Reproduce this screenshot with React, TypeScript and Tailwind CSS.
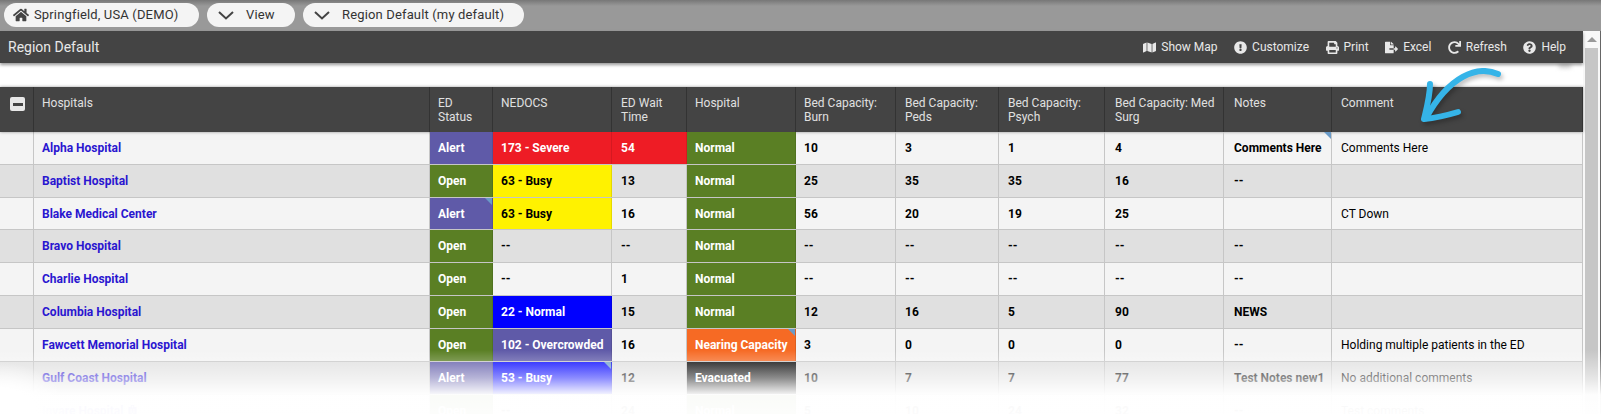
import { FaExclamationCircle, FaFileExport, FaHome, FaHospital, FaMap, FaPrint, FaQuestionCircle, FaRedo } from 'react-icons/fa';

const cols = 'grid grid-cols-[34px_396px_63px_119px_75px_109px_100px_103px_106px_119px_108px_251px]';

// left padding per column, the source table has fractional widths
const pads = ['pl-2', 'pl-2', 'pl-[9px]', 'pl-2', 'pl-2', 'pl-[9px]', 'pl-[9px]', 'pl-[10px]', 'pl-[10px]', 'pl-[9px]'];

const GREEN = 'bg-[#5a7f24] text-white';
const PURPLE = 'bg-[#5f5aa8] text-white';
const RED = 'bg-[#ee1c25] text-white';
const YELLOW = 'bg-[#fff200] text-black';
const BLUE = 'bg-[#0000ff] text-white';
const ORANGE = 'bg-[#f66a24] text-white';
const BLACK = 'bg-black text-white';

type Cell = { text?: string; color?: string; flag?: boolean; normal?: boolean };

const headers = ['ED Status', 'NEDOCS', 'ED Wait Time', 'Hospital', 'Bed Capacity: Burn', 'Bed Capacity: Peds', 'Bed Capacity: Psych', 'Bed Capacity: Med Surg', 'Notes', 'Comment'];

const rows: { name: string; icon?: boolean; cells: Cell[] }[] = [
  { name: 'Alpha Hospital', cells: [
    { text: 'Alert', color: PURPLE }, { text: '173 - Severe', color: RED }, { text: '54', color: RED }, { text: 'Normal', color: GREEN },
    { text: '10' }, { text: '3' }, { text: '1' }, { text: '4' }, { text: 'Comments Here', flag: true }, { text: 'Comments Here', normal: true },
  ] },
  { name: 'Baptist Hospital', cells: [
    { text: 'Open', color: GREEN }, { text: '63 - Busy', color: YELLOW }, { text: '13' }, { text: 'Normal', color: GREEN },
    { text: '25' }, { text: '35' }, { text: '35' }, { text: '16' }, { text: '--' }, {},
  ] },
  { name: 'Blake Medical Center', cells: [
    { text: 'Alert', color: PURPLE, flag: true }, { text: '63 - Busy', color: YELLOW }, { text: '16' }, { text: 'Normal', color: GREEN },
    { text: '56' }, { text: '20' }, { text: '19' }, { text: '25' }, {}, { text: 'CT Down', normal: true },
  ] },
  { name: 'Bravo Hospital', cells: [
    { text: 'Open', color: GREEN }, { text: '--' }, { text: '--' }, { text: 'Normal', color: GREEN },
    { text: '--' }, { text: '--' }, { text: '--' }, { text: '--' }, { text: '--' }, {},
  ] },
  { name: 'Charlie Hospital', cells: [
    { text: 'Open', color: GREEN }, { text: '--' }, { text: '1' }, { text: 'Normal', color: GREEN },
    { text: '--' }, { text: '--' }, { text: '--' }, { text: '--' }, { text: '--' }, {},
  ] },
  { name: 'Columbia Hospital', cells: [
    { text: 'Open', color: GREEN }, { text: '22 - Normal', color: BLUE }, { text: '15' }, { text: 'Normal', color: GREEN },
    { text: '12' }, { text: '16' }, { text: '5' }, { text: '90' }, { text: 'NEWS' }, {},
  ] },
  { name: 'Fawcett Memorial Hospital', cells: [
    { text: 'Open', color: GREEN }, { text: '102 - Overcrowded', color: PURPLE }, { text: '16' }, { text: 'Nearing Capacity', color: ORANGE, flag: true },
    { text: '3' }, { text: '0' }, { text: '0' }, { text: '0' }, { text: '--' }, { text: 'Holding multiple patients in the ED', normal: true },
  ] },
  { name: 'Gulf Coast Hospital', cells: [
    { text: 'Alert', color: PURPLE }, { text: '53 - Busy', color: BLUE, flag: true }, { text: '12' }, { text: 'Evacuated', color: BLACK },
    { text: '10' }, { text: '7' }, { text: '7' }, { text: '77' }, { text: 'Test Notes new1' }, { text: 'No additional comments', normal: true },
  ] },
  { name: 'Invare Hospital', icon: true, cells: [
    { text: 'Open', color: GREEN }, { text: '--' }, { text: '24' }, { text: 'Normal', color: GREEN },
    { text: '5' }, { text: '10' }, { text: '24' }, { text: '32' }, { text: '--' }, { text: 'Test comments', normal: true },
  ] },
];

const tools = [
  { label: 'Show Map', Icon: FaMap },
  { label: 'Customize', Icon: FaExclamationCircle },
  { label: 'Print', Icon: FaPrint },
  { label: 'Excel', Icon: FaFileExport },
  { label: 'Refresh', Icon: FaRedo },
  { label: 'Help', Icon: FaQuestionCircle },
];

function Chevron() {
  return (
    <svg width="16" height="9" viewBox="0 0 16 9" fill="none" stroke="#444" strokeWidth="2">
      <path d="M1 1l7 6.5L15 1" />
    </svg>
  );
}

export default function App() {
  return (
    <div className="relative h-[414px] w-[1601px] overflow-hidden bg-white font-['Roboto',sans-serif] text-xs">
      <div className="flex h-[31px] items-start gap-2 bg-[linear-gradient(#777777,#999999_6px)] pl-1 pt-[3px] text-[13px] tracking-[0.15px]">
        <div className="flex h-6 w-[195px] items-center gap-[5px] rounded-full bg-[#f4f4f4] pl-[9px] text-[#333]">
          <FaHome size={16} color="#444" />
          Springfield, USA (DEMO)
        </div>
        <div className="flex h-6 w-[88px] items-center gap-3 rounded-full bg-[#f4f4f4] pl-[11px] text-[#333]">
          <Chevron />
          View
        </div>
        <div className="flex h-6 w-[221px] items-center gap-3 rounded-full bg-[#f4f4f4] pl-[11px] text-[#333]">
          <Chevron />
          Region Default (my default)
        </div>
      </div>

      <div className="flex">
        <div className="w-[1583px]">
          <div className="relative z-10 flex h-8 items-center justify-between bg-[#444444] pl-2 pr-[17px] shadow-[0_2px_3px_rgba(0,0,0,0.4)]">
            <span className="text-sm text-[#e8e8e8]">Region Default</span>
            <div className="flex items-center gap-[16.5px]">
              {tools.map(({ label, Icon }) => (
                <span key={label} className="flex items-center gap-[5px] text-[#e8e8e8]">
                  <Icon size={13} />
                  {label}
                </span>
              ))}
            </div>
          </div>

          <div className={`${cols} relative mt-6 h-[45px] bg-[#444444] text-[#e0e0e0] shadow-[0_0_3px_rgba(0,0,0,0.4)]`}>
            <div className="border-r border-[#333] pl-[10px] pt-[10px]">
              <div className="flex h-[14px] w-[15px] items-center justify-center rounded-[2px] bg-[#e8e8e8]">
                <div className="h-[3px] w-[10px] bg-[#444]" />
              </div>
            </div>
            <div className="border-r border-[#333] px-2 pt-[9px] leading-[14px]">Hospitals</div>
            {headers.map((h, i) => (
              <div key={h} className={`border-r border-[#333] pr-1 pt-[9px] leading-[14px] ${pads[i]}`}>{h}</div>
            ))}
          </div>

          {rows.map((row, i) => (
            <div key={row.name} className={`${cols} h-[32.83px] border-b border-[#c6c6c6] ${i % 2 === 0 ? 'bg-[#f4f4f4]' : 'bg-[#e0e0e0]'}`}>
              <div className="border-r border-[#c6c6c6]" />
              <div className="flex items-center gap-1 border-r border-[#c6c6c6] px-2 font-bold text-[#2a16d0]">
                {row.name}
                {row.icon && <FaHospital size={11} />}
              </div>
              {row.cells.map((c, j) => (
                <div key={j} className={`relative flex items-center whitespace-nowrap border-r ${pads[j]} ${c.normal ? 'font-normal' : 'font-bold'} ${c.color ? `${c.color} border-black/10` : 'border-[#c6c6c6] text-black'}`}>
                  {c.text}
                  {c.flag && <span className="absolute right-0 top-0 border-l-[7px] border-t-[7px] border-l-transparent border-t-[#6a9bc8]" />}
                </div>
              ))}
            </div>
          ))}
        </div>

        <div className="w-[18px] border-r border-[#666] bg-[#f8f8f8] pl-0.5 pr-0.5">
          <div className="flex h-[17px] items-center justify-center">
            <span className="border-x-[5px] border-b-[5px] border-x-transparent border-b-[#999]" />
          </div>
          <div className="h-[370px] w-[13px] bg-[#c6c6c6]" />
        </div>
      </div>

      {/* hand drawn callout, sits on top of the screenshot */}
      <svg className="absolute left-[1415px] top-[60px] drop-shadow-[2px_3px_2px_rgba(0,0,0,0.25)]" width="95" height="70" viewBox="0 0 95 70" fill="none" stroke="#35b4e8" strokeWidth="6" strokeLinecap="round" strokeLinejoin="round">
        <path d="M83 14C62 5 34 16 11 58" />
        <path d="M15 24C15 36 12 47 9 59C20 58 33 55 43 52" />
      </svg>
      <div className="absolute left-[1559px] top-[64px] h-1 w-3 bg-[#cccccc] blur-[2px]" />

      {/* torn-off fade at the bottom */}
      <div className="absolute inset-x-0 bottom-0 h-[64px] bg-[linear-gradient(to_bottom,rgba(255,255,255,0)_0px,rgba(255,255,255,0.55)_28px,rgba(255,255,255,0.97)_45px,rgba(255,255,255,0.985)_100%)]" />
      <div className="absolute bottom-0 left-0 h-[52px] w-[70px] bg-[radial-gradient(ellipse_at_bottom_left,#ffffff_35%,rgba(255,255,255,0)_70%)]" />
    </div>
  );
}
